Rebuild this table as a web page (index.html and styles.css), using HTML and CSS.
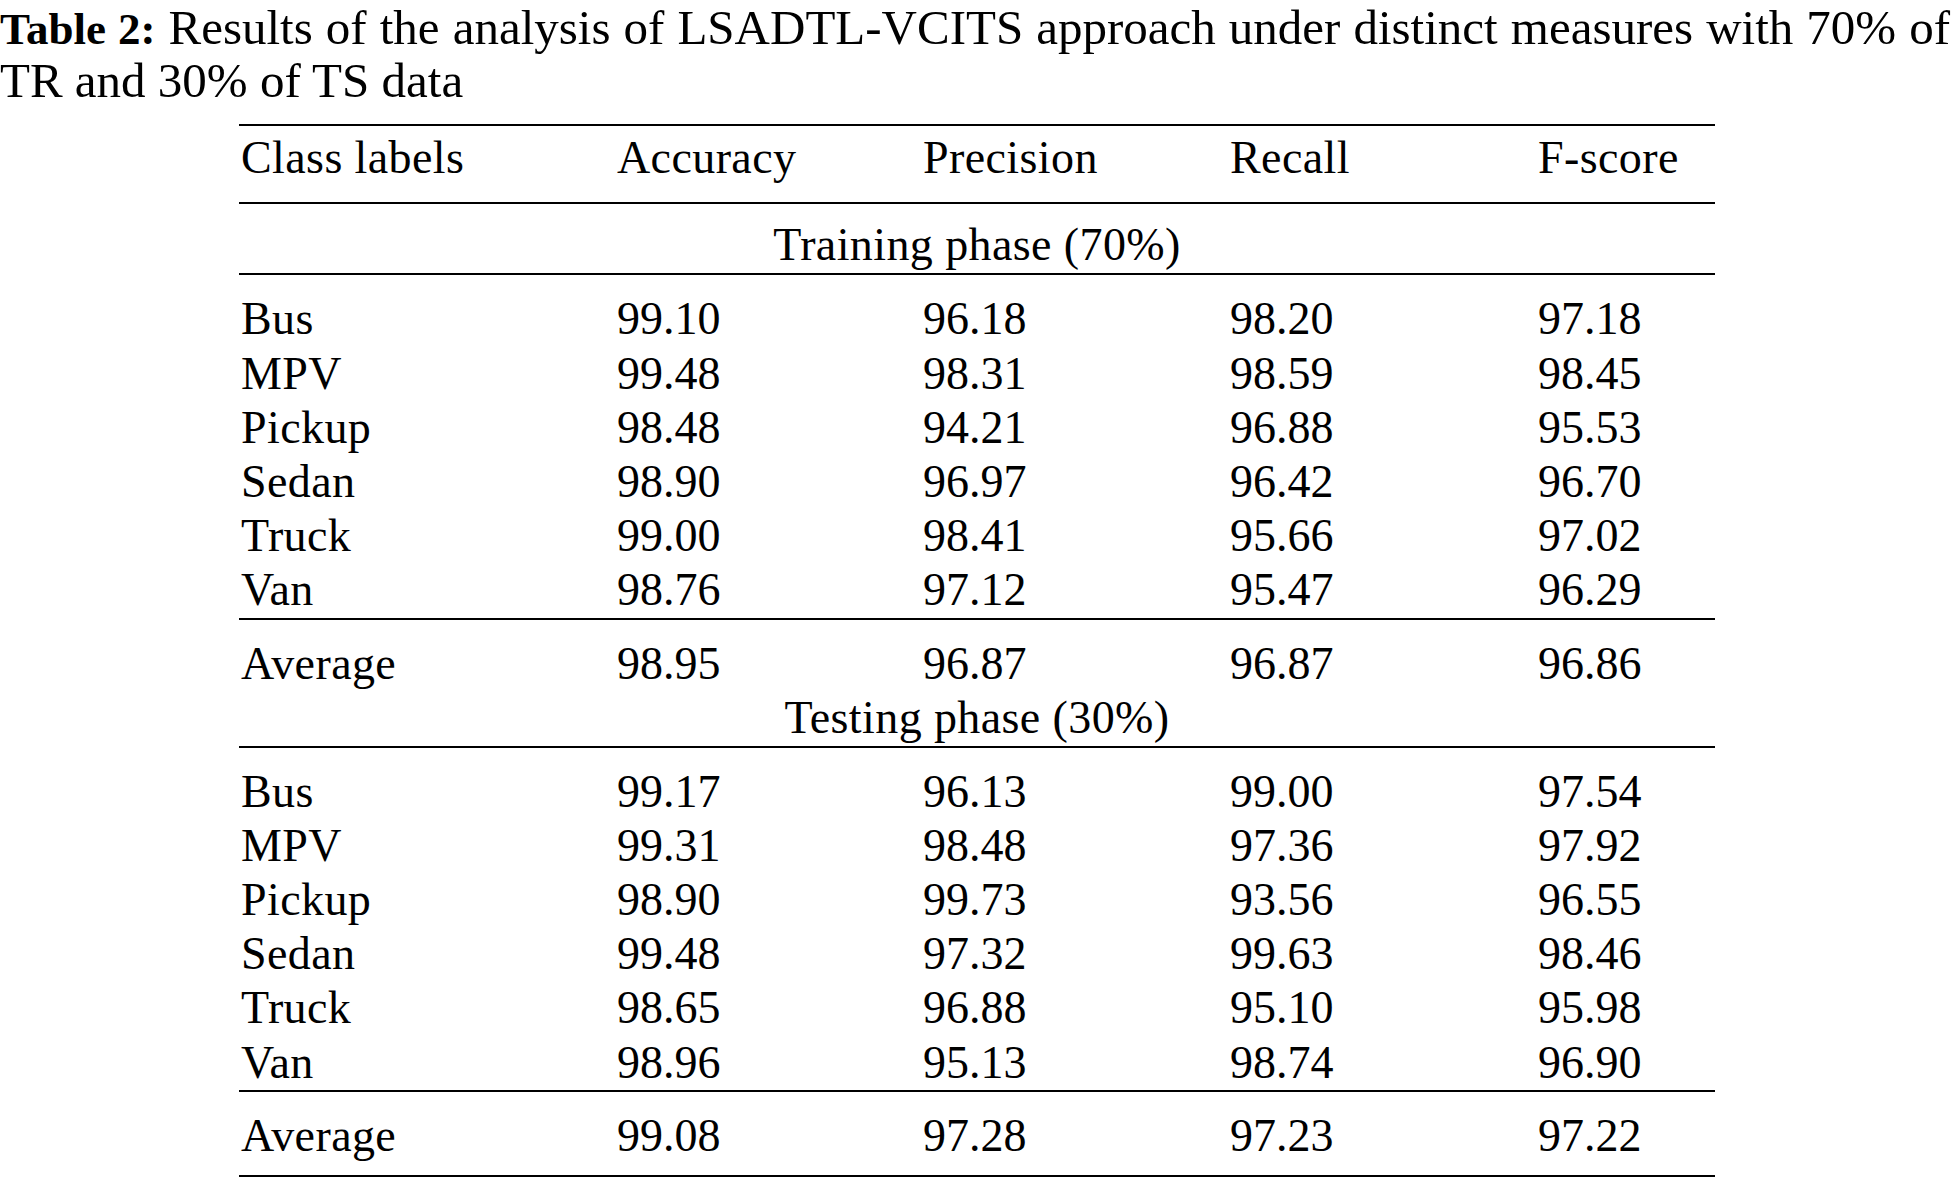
FILE: index.html
```html
<!DOCTYPE html>
<html>
<head>
<meta charset="utf-8">
<link rel="stylesheet" href="styles.css">
</head>
<body>
<div class="page">
  <p class="caption"><span class="cap-line cap-first"><b>Table 2:</b> Results of the analysis of LSADTL-VCITS approach under distinct measures with 70% of</span><span class="cap-line">TR and 30% of TS data</span></p>
  <table class="results">
    <colgroup>
      <col class="c1"><col class="c2"><col class="c3"><col class="c4"><col class="c5">
    </colgroup>
    <thead>
      <tr class="head"><th>Class labels</th><th>Accuracy</th><th>Precision</th><th>Recall</th><th>F-score</th></tr>
    </thead>
    <tbody>
      <tr class="phase"><td colspan="5">Training phase (70%)</td></tr>
      <tr class="first"><td>Bus</td><td>99.10</td><td>96.18</td><td>98.20</td><td>97.18</td></tr>
      <tr><td>MPV</td><td>99.48</td><td>98.31</td><td>98.59</td><td>98.45</td></tr>
      <tr><td>Pickup</td><td>98.48</td><td>94.21</td><td>96.88</td><td>95.53</td></tr>
      <tr><td>Sedan</td><td>98.90</td><td>96.97</td><td>96.42</td><td>96.70</td></tr>
      <tr><td>Truck</td><td>99.00</td><td>98.41</td><td>95.66</td><td>97.02</td></tr>
      <tr class="last"><td>Van</td><td>98.76</td><td>97.12</td><td>95.47</td><td>96.29</td></tr>
      <tr class="avg"><td>Average</td><td>98.95</td><td>96.87</td><td>96.87</td><td>96.86</td></tr>
      <tr class="phase phase2"><td colspan="5">Testing phase (30%)</td></tr>
      <tr class="first"><td>Bus</td><td>99.17</td><td>96.13</td><td>99.00</td><td>97.54</td></tr>
      <tr><td>MPV</td><td>99.31</td><td>98.48</td><td>97.36</td><td>97.92</td></tr>
      <tr><td>Pickup</td><td>98.90</td><td>99.73</td><td>93.56</td><td>96.55</td></tr>
      <tr><td>Sedan</td><td>99.48</td><td>97.32</td><td>99.63</td><td>98.46</td></tr>
      <tr><td>Truck</td><td>98.65</td><td>96.88</td><td>95.10</td><td>95.98</td></tr>
      <tr class="last"><td>Van</td><td>98.96</td><td>95.13</td><td>98.74</td><td>96.90</td></tr>
      <tr class="avg final"><td>Average</td><td>99.08</td><td>97.28</td><td>97.23</td><td>97.22</td></tr>
    </tbody>
  </table>
</div>
</body>
</html>
```

FILE: styles.css
```css
html, body {
  margin: 0;
  padding: 0;
  background: #ffffff;
}

body {
  font-family: "Liberation Serif", "Times New Roman", serif;
  font-size: 46px;
  color: #000000;
}

.page {
  width: 1954px;
}

.caption {
  margin: 0;
  padding-top: 2px;
  width: 1950px;
  font-size: 49px;
  line-height: 51px;
}

.cap-line {
  display: block;
  white-space: nowrap;
}

.cap-first {
  text-align: justify;
  text-align-last: justify;
  white-space: normal;
}

.caption b {
  font-weight: bold;
  font-size: 45px;
}

.results {
  margin-top: 18px;
  margin-left: 239px;
  width: 1476px;
  table-layout: fixed;
  border-collapse: separate;
  border-spacing: 0;
}

.c1 { width: 376px; }
.c2 { width: 306px; }
.c3 { width: 307px; }
.c4 { width: 308px; }
.c5 { width: 179px; }

.results th,
.results td {
  padding: 0 0 0 2px;
  text-align: left;
  font-weight: normal;
  white-space: nowrap;
  line-height: 54.2px;
  vertical-align: baseline;
}

.results th,
.results td:first-child {
  letter-spacing: 0.4px;
}

.head th {
  border-top: 2px solid #000;
  border-bottom: 2px solid #000;
  line-height: 54px;
  padding-top: 5px;
  padding-bottom: 17px;
}

.phase td {
  text-align: center;
  padding-left: 0;
  line-height: 46px;
  letter-spacing: 0.6px;
  padding-top: 18px;
  padding-bottom: 5px;
  border-bottom: 2px solid #000;
}

.phase2 td {
  padding-top: 8px;
  padding-bottom: 5.5px;
}

.first td {
  padding-top: 17.4px;
}

.phase2 + .first td {
  padding-top: 16.4px;
}

.last td {
  border-bottom: 2px solid #000;
}

.avg td {
  line-height: 46px;
  padding-top: 21px;
}

.final td {
  padding-bottom: 16.5px;
  border-bottom: 2px solid #000;
}
```
